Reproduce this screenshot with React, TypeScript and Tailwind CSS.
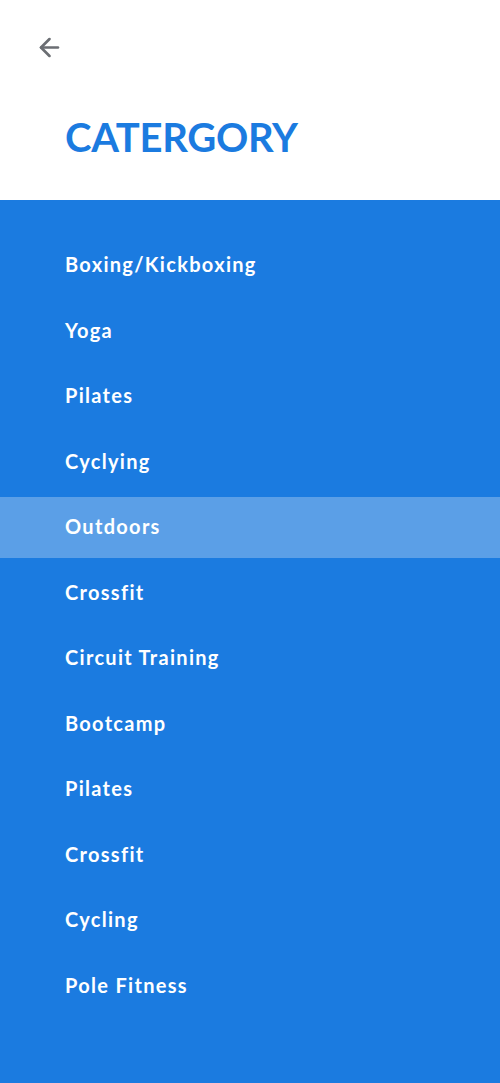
import { ArrowLeft } from "lucide-react";

const categories = [
  "Boxing/Kickboxing",
  "Yoga",
  "Pilates",
  "Cyclying",
  "Outdoors",
  "Crossfit",
  "Circuit Training",
  "Bootcamp",
  "Pilates",
  "Crossfit",
  "Cycling",
  "Pole Fitness",
];

const App = () => {
  const active = 4;

  return (
    <div className="min-h-screen flex flex-col bg-[#1b7be0]" style={{ fontFamily: "'Lato', 'Open Sans', sans-serif" }}>
      {/* Header */}
      <div className="h-[200px] bg-white flex flex-col">
        <button className="mt-[33px] ml-[35px] w-7 h-7 text-[#6b6e73] bg-transparent border-none">
          <ArrowLeft size={29} strokeWidth={2.2} />
        </button>
        <h1 className="mt-[56px] ml-[65px] text-[40px] leading-none font-bold tracking-[-0.3px] text-[#1b7be0]">
          CATERGORY
        </h1>
      </div>

      {/* Category list */}
      <ul className="flex flex-col gap-[4.5px] pt-[35px] pb-10">
        {categories.map((name, i) => (
          <li
            key={i}
            className={`h-[61px] flex items-center pl-[65px] pb-[3px] text-[20px] font-bold tracking-[1.3px] text-white ${
              i === active ? "bg-[#5b9fe7]" : ""
            }`}
          >
            {name}
          </li>
        ))}
      </ul>
    </div>
  );
};

export default App;
